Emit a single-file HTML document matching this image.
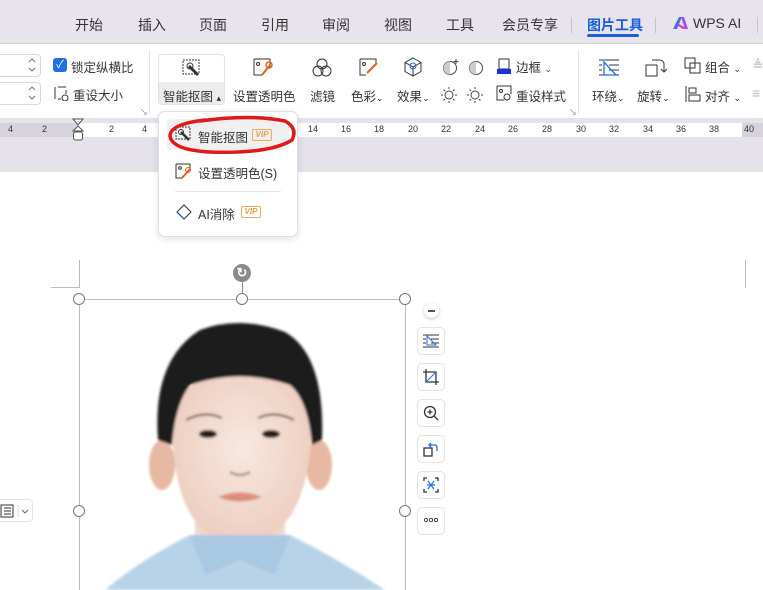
<!DOCTYPE html>
<html><head><meta charset="utf-8"><style>
*{margin:0;padding:0;box-sizing:border-box}
body{width:763px;height:590px;overflow:hidden;background:#fff;font-family:"Liberation Sans","Noto Sans CJK SC",sans-serif;color:#333;position:relative}
.a{position:absolute;white-space:nowrap}
.tab{font-size:14px;top:15px;color:#333}
.t{font-size:12.5px;color:#333}
</style></head><body>
<div class="a" style="left:0;top:0;width:763px;height:44px;background:#e8e4ee;border-bottom:1px solid #d5d0dc"></div>
<div class="a tab" style="left:75px">开始</div>
<div class="a tab" style="left:138px">插入</div>
<div class="a tab" style="left:199px">页面</div>
<div class="a tab" style="left:261px">引用</div>
<div class="a tab" style="left:322px">审阅</div>
<div class="a tab" style="left:384px">视图</div>
<div class="a tab" style="left:446px">工具</div>
<div class="a tab" style="left:502px">会员专享</div>
<div class="a" style="left:571px;top:17px;width:1px;height:16px;background:#c8c3cf"></div>
<div class="a tab" style="left:587px;color:#1a5fd6;font-weight:bold">图片工具</div>
<div class="a" style="left:587px;top:34px;width:52px;height:3px;background:#1a5fd6;border-radius:2px"></div>
<div class="a" style="left:655px;top:17px;width:1px;height:16px;background:#c8c3cf"></div>
<svg class="a" style="left:672px;top:16px" width="18" height="14" viewBox="0 0 18 14"><path d="M1 13 L7 1 L10 1 L5 13Z" fill="#4a6cf0"/><path d="M7 8 L16 13 L11 13 L6 10Z" fill="#e53fa0"/><path d="M9 1 L12 1 L16 13 L13 13Z" fill="#9b4ff0"/></svg>
<div class="a tab" style="left:693px">WPS AI</div>
<div class="a" style="left:757px;top:17px;width:1px;height:16px;background:#c8c3cf"></div>
<div class="a" style="left:0;top:44px;width:763px;height:74px;background:#fff;box-shadow:0 1px 3px rgba(0,0,0,.12)"></div>
<div class="a" style="left:-5px;top:54px;width:46px;height:23px;border:1px solid #d8d8d8;border-radius:4px"></div>
<div class="a" style="left:-5px;top:82px;width:46px;height:23px;border:1px solid #d8d8d8;border-radius:4px"></div>
<svg class="a" style="left:27px;top:57px" width="10" height="16"><path d="M2 5l3-3 3 3M2 11l3 3 3-3" fill="none" stroke="#777"/></svg>
<svg class="a" style="left:27px;top:85px" width="10" height="16"><path d="M2 5l3-3 3 3M2 11l3 3 3-3" fill="none" stroke="#777"/></svg>
<div class="a" style="left:53px;top:58px;width:14px;height:14px;background:#1f6fe5;border-radius:3px;color:#fff;font-size:11px;line-height:14px;text-align:center">✓</div>
<div class="a t" style="left:71px;top:57px">锁定纵横比</div>
<svg class="a" style="left:53px;top:85px" width="16" height="16"><path d="M2 2v12M5 2h8M5 14h3M13 5v4" stroke="#333" fill="none"/><circle cx="12" cy="13" r="3" stroke="#333" fill="none"/></svg>
<div class="a t" style="left:73px;top:85px">重设大小</div>
<div class="a" style="left:140px;top:107px;font-size:8px;color:#888">↘</div>
<div class="a" style="left:149px;top:50px;width:1px;height:64px;background:#e3e3e3"></div>
<div class="a" style="left:158px;top:54px;width:67px;height:51px;border:1px solid #e2e2e2;border-radius:4px;background:#fff"></div>
<div class="a" style="left:159px;top:82px;width:65px;height:22px;background:#ececec"></div>
<svg class="a" style="left:181px;top:58px" width="22" height="20"><rect x="2" y="2" width="16" height="14" fill="none" stroke="#333" stroke-dasharray="2 1"/><path d="M8 8l9 9" stroke="#333" stroke-width="3"/><circle cx="9" cy="8" r="3" fill="none" stroke="#333"/></svg>
<div class="a t" style="left:163px;top:86px">智能抠图 <span style="font-size:9px">▴</span></div>
<svg class="a" style="left:252px;top:57px" width="22" height="22"><path d="M2 2h16v8M2 2v16h8" fill="none" stroke="#333"/><circle cx="6" cy="7" r="1.5" fill="none" stroke="#333"/><path d="M18 8l-8 10" stroke="#e0601c" stroke-width="2"/><circle cx="17" cy="8" r="3" fill="none" stroke="#e0601c" stroke-width="1.5"/></svg>
<div class="a t" style="left:233px;top:86px">设置透明色</div>
<svg class="a" style="left:311px;top:57px" width="22" height="22"><circle cx="11" cy="7" r="5" fill="none" stroke="#333"/><circle cx="7" cy="14" r="5" fill="none" stroke="#333"/><circle cx="15" cy="14" r="5" fill="none" stroke="#333"/></svg>
<div class="a t" style="left:310px;top:86px">滤镜</div>
<svg class="a" style="left:358px;top:57px" width="22" height="22"><path d="M2 2h16v6M2 2v16h6" fill="none" stroke="#333"/><circle cx="6" cy="7" r="1.5" fill="none" stroke="#333"/><path d="M19 6l-10 10" stroke="#e0601c" stroke-width="2"/></svg>
<div class="a t" style="left:351px;top:86px">色彩<span style="font-size:9px">⌄</span></div>
<svg class="a" style="left:402px;top:56px" width="22" height="22"><path d="M11 2l8 4.5v9L11 20l-8-4.5v-9z" fill="none" stroke="#333"/><path d="M3 6.5l8 4.5 8-4.5M11 11v9" stroke="#333" fill="none"/><circle cx="11" cy="10" r="3" fill="none" stroke="#1f6fe5"/></svg>
<div class="a t" style="left:397px;top:86px">效果<span style="font-size:9px">⌄</span></div>
<svg class="a" style="left:441px;top:58px" width="20" height="18"><circle cx="9" cy="10" r="6.5" fill="none" stroke="#444"/><path d="M9 3.5a6.5 6.5 0 0 0 0 13z" fill="#ccc"/><path d="M15 1v5M12.5 3.5h5" stroke="#444"/></svg>
<svg class="a" style="left:467px;top:58px" width="20" height="18"><circle cx="9" cy="10" r="6.5" fill="none" stroke="#444"/><path d="M9 3.5a6.5 6.5 0 0 0 0 13z" fill="#ccc"/><path d="M12.5 3.5h5" stroke="#fff" stroke-width="2"/></svg>
<svg class="a" style="left:441px;top:85px" width="18" height="18"><circle cx="8" cy="10" r="4" fill="none" stroke="#444"/><path d="M8 2v2M8 16v2M0 10h2M14 10h2M2.5 4.5l1.5 1.5M12 14l1.5 1.5M2.5 15.5L4 14M12 6l1.5-1.5" stroke="#444"/></svg>
<svg class="a" style="left:467px;top:85px" width="18" height="18"><circle cx="8" cy="10" r="4" fill="none" stroke="#444"/><path d="M8 2v2M8 16v2M0 10h2M14 10h2M2.5 4.5l1.5 1.5M12 14l1.5 1.5M2.5 15.5L4 14" stroke="#444"/></svg>
<svg class="a" style="left:496px;top:57px" width="16" height="18"><path d="M3 2h10v10H3z" fill="none" stroke="#333"/><rect x="1" y="12" width="14" height="5" fill="#1a2fe0"/></svg>
<div class="a t" style="left:516px;top:57px">边框 <span style="font-size:9px">⌄</span></div>
<svg class="a" style="left:496px;top:85px" width="16" height="16"><path d="M1 1h14v8M1 1v14h7" fill="none" stroke="#333"/><circle cx="5" cy="6" r="1.5" fill="none" stroke="#333"/><circle cx="11" cy="12" r="3" fill="none" stroke="#333"/></svg>
<div class="a t" style="left:516px;top:86px">重设样式</div>
<div class="a" style="left:569px;top:107px;font-size:8px;color:#888">↘</div>
<div class="a" style="left:578px;top:50px;width:1px;height:64px;background:#e3e3e3"></div>
<svg class="a" style="left:597px;top:57px" width="24" height="22"><path d="M2 3h20M12 8h10M12 13h10M2 18h20M2 8h3M2 13h3" stroke="#333"/><path d="M7 5v13h12z" fill="none" stroke="#1f6fe5" stroke-width="1.3"/></svg>
<div class="a t" style="left:592px;top:86px">环绕<span style="font-size:9px">⌄</span></div>
<svg class="a" style="left:644px;top:57px" width="24" height="22"><rect x="2" y="8" width="11" height="11" fill="none" stroke="#333"/><path d="M8 3h8a4 4 0 0 1 4 4v7M17 12l3 3 3-3" fill="none" stroke="#333"/></svg>
<div class="a t" style="left:637px;top:86px">旋转<span style="font-size:9px">⌄</span></div>
<svg class="a" style="left:684px;top:57px" width="18" height="18"><rect x="1" y="1" width="10" height="10" fill="none" stroke="#333"/><rect x="6" y="6" width="10" height="10" fill="none" stroke="#333"/></svg>
<div class="a t" style="left:705px;top:57px">组合 <span style="font-size:9px">⌄</span></div>
<svg class="a" style="left:684px;top:85px" width="18" height="18"><path d="M2 1v16M5 3h7v5H5zM5 10h11v6H5z" fill="none" stroke="#333"/></svg>
<div class="a t" style="left:705px;top:86px">对齐 <span style="font-size:9px">⌄</span></div>
<div class="a" style="left:752px;top:57px;font-size:14px;color:#bbb">≜</div>
<div class="a" style="left:752px;top:85px;font-size:14px;color:#bbb">≡</div>
<div class="a" style="left:0;top:118px;width:763px;height:54px;background:#e6e2ec"></div>
<div class="a" style="left:0;top:123px;width:763px;height:14px;background:#d6d3dc"></div>
<div class="a" style="left:78px;top:123px;width:664px;height:14px;background:#fff"></div>
<div class="a" style="left:0;top:124px;width:763px;font-size:9px;color:#333;font-family:'Liberation Sans',sans-serif">
<span class="a" style="left:8px">4</span><span class="a" style="left:42px">2</span><span class="a" style="left:109px">2</span><span class="a" style="left:142px">4</span>
<span class="a" style="left:308px">14</span><span class="a" style="left:341px">16</span><span class="a" style="left:374px">18</span><span class="a" style="left:408px">20</span><span class="a" style="left:441px">22</span><span class="a" style="left:475px">24</span><span class="a" style="left:508px">26</span><span class="a" style="left:542px">28</span><span class="a" style="left:576px">30</span><span class="a" style="left:609px">32</span><span class="a" style="left:643px">34</span><span class="a" style="left:676px">36</span><span class="a" style="left:709px">38</span><span class="a" style="left:744px">40</span></div>
<svg class="a" style="left:72px;top:118px" width="12" height="30"><path d="M1 1h10L6 7z M6 8l5 5H1z" fill="#fff" stroke="#555"/><rect x="1.5" y="14" width="9" height="8" rx="2" fill="#fff" stroke="#555"/></svg>
<div class="a" style="left:0;top:172px;width:763px;height:418px;background:#fff"></div>
<div class="a" style="left:79px;top:260px;width:1px;height:28px;background:#bbb"></div>
<div class="a" style="left:51px;top:287px;width:29px;height:1px;background:#bbb"></div>
<div class="a" style="left:745px;top:260px;width:1px;height:28px;background:#bbb"></div>
<svg class="a" style="left:80px;top:299px" width="326" height="291" viewBox="80 299 326 291">
<defs><filter id="b"><feGaussianBlur stdDeviation="1.2"/></filter><radialGradient id="sk" cx="50%" cy="45%" r="60%"><stop offset="0" stop-color="#f8e8e0"/><stop offset="1" stop-color="#eccbbc"/></radialGradient></defs>
<g filter="url(#b)">
<path d="M105 590 Q140 560 190 535 L290 535 Q340 560 385 590Z" fill="#b8d3e8"/>
<path d="M195 520 L285 520 L285 545 Q240 570 195 545Z" fill="#f0d8cc"/>
<ellipse cx="162" cy="465" rx="13" ry="25" fill="#e7b8a2"/>
<ellipse cx="319" cy="465" rx="13" ry="25" fill="#e7b8a2"/>
<path d="M172 420 Q172 540 240 545 Q310 540 312 420 Q312 380 240 370 Q172 380 172 420Z" fill="url(#sk)"/>
<path d="M158 440 Q152 360 200 330 Q240 315 285 332 Q325 355 322 440 L312 445 Q308 400 290 385 Q240 368 190 385 Q175 405 172 445Z" fill="#1b1b1b"/>
<ellipse cx="208" cy="434" rx="9" ry="4" fill="#2a1e1a"/>
<ellipse cx="271" cy="434" rx="9" ry="4" fill="#2a1e1a"/>
<path d="M186 420 Q205 410 222 418 M258 418 Q275 410 294 420" stroke="#6a4a3e" stroke-width="2" fill="none"/>
<path d="M230 472 Q240 478 250 472" stroke="#a07060" stroke-width="2" fill="none"/>
<path d="M218 497 Q240 488 262 497 Q240 506 218 497Z" fill="#d98e80"/>
<path d="M190 535 L205 575 L240 560 L275 575 L290 535" fill="#a9c8e2"/>
</g></svg>
<div class="a" style="left:79px;top:299px;width:327px;height:291px;border:1px solid #bbb;border-bottom:none"></div>
<div class="a" style="left:242px;top:280px;width:1px;height:19px;background:#888"></div>
<div class="a" style="left:233px;top:264px;width:18px;height:18px;border-radius:50%;background:#8a8a8a;color:#fff;font-size:13px;line-height:18px;text-align:center;font-weight:bold">↻</div>
<div class="a" style="left:73px;top:293px;width:12px;height:12px;border-radius:50%;border:1px solid #777;background:#fff"></div>
<div class="a" style="left:236px;top:293px;width:12px;height:12px;border-radius:50%;border:1px solid #777;background:#fff"></div>
<div class="a" style="left:399px;top:293px;width:12px;height:12px;border-radius:50%;border:1px solid #777;background:#fff"></div>
<div class="a" style="left:73px;top:505px;width:12px;height:12px;border-radius:50%;border:1px solid #777;background:#fff"></div>
<div class="a" style="left:399px;top:505px;width:12px;height:12px;border-radius:50%;border:1px solid #777;background:#fff"></div>
<div class="a" style="left:-4px;top:499px;width:37px;height:23px;border:1px solid #e4e4e4;border-radius:4px;background:#fff"></div>
<svg class="a" style="left:0;top:503px" width="32" height="16"><path d="M1 2h12v12H1zM4 5h7M4 8h7M4 11h7" fill="none" stroke="#333"/><path d="M18 2v12" stroke="#ddd"/><path d="M22 7l3 3 3-3" fill="none" stroke="#666"/></svg>
<div class="a" style="left:424px;top:303px;width:15px;height:15px;border-radius:50%;background:#fff;box-shadow:0 1px 3px rgba(0,0,0,.25)"></div>
<div class="a" style="left:428px;top:310px;width:7px;height:2px;background:#555"></div>
<div class="a" style="left:417px;top:327px;width:28px;height:28px;border:1px solid #e3e3e3;border-radius:5px"></div>
<svg class="a" style="left:423px;top:333px" width="16" height="16"><path d="M0 2h16M8 6h8M8 10h8M0 14h16M0 6h3M0 10h3" stroke="#333"/><path d="M4 3v9h9z" fill="none" stroke="#1f6fe5"/></svg>
<div class="a" style="left:417px;top:363px;width:28px;height:28px;border:1px solid #e3e3e3;border-radius:5px"></div>
<svg class="a" style="left:423px;top:369px" width="16" height="16"><path d="M3 0v13h13M0 3h13v13" fill="none" stroke="#333" stroke-width="1.3"/><path d="M3 13L13 3" stroke="#1f6fe5"/></svg>
<div class="a" style="left:417px;top:399px;width:28px;height:28px;border:1px solid #e3e3e3;border-radius:5px"></div>
<svg class="a" style="left:423px;top:405px" width="16" height="16"><circle cx="7" cy="7" r="5.5" fill="none" stroke="#333" stroke-width="1.3"/><path d="M11 11l4 4M4.5 7h5M7 4.5v5" stroke="#333" stroke-width="1.3"/></svg>
<div class="a" style="left:417px;top:435px;width:28px;height:28px;border:1px solid #e3e3e3;border-radius:5px"></div>
<svg class="a" style="left:423px;top:441px" width="16" height="16"><rect x="1" y="7" width="8" height="8" fill="none" stroke="#333" stroke-width="1.3"/><path d="M6 4h6a2 2 0 0 1 2 2v4M8 2L6 4l2 2" fill="none" stroke="#1f6fe5" stroke-width="1.3"/></svg>
<div class="a" style="left:417px;top:471px;width:28px;height:28px;border:1px solid #e3e3e3;border-radius:5px"></div>
<svg class="a" style="left:423px;top:477px" width="16" height="16"><path d="M1 4V1h3M12 1h3v3M15 12v3h-3M4 15H1v-3" fill="none" stroke="#333" stroke-width="1.3"/><path d="M5 4l6 8M11 4l-6 8M4 8h8" stroke="#1f6fe5" stroke-width="1.2"/></svg>
<div class="a" style="left:417px;top:507px;width:28px;height:28px;border:1px solid #e3e3e3;border-radius:5px"></div>
<svg class="a" style="left:423px;top:517px" width="16" height="6"><circle cx="3" cy="3" r="1.6" fill="none" stroke="#444"/><circle cx="8" cy="3" r="1.6" fill="none" stroke="#444"/><circle cx="13" cy="3" r="1.6" fill="none" stroke="#444"/></svg>
<div class="a" style="left:158px;top:111px;width:140px;height:126px;background:#fff;border:1px solid #e0e0e0;border-radius:7px;box-shadow:0 2px 8px rgba(0,0,0,.12)"></div>
<div class="a" style="left:167px;top:119px;width:122px;height:31px;background:#f0f0f0;border-radius:4px"></div>
<svg class="a" style="left:175px;top:126px" width="17" height="16"><rect x="1" y="1" width="14" height="12" fill="none" stroke="#333" stroke-dasharray="2 1"/><path d="M6 6l8 8" stroke="#333" stroke-width="2.5"/><circle cx="6" cy="6" r="2.5" fill="none" stroke="#333"/></svg>
<div class="a t" style="left:198px;top:127px">智能抠图</div>
<div class="a" style="left:252px;top:129px;width:20px;height:12px;border:1px solid #e8a860;border-radius:2px;color:#e0a050;font-size:8px;font-weight:bold;font-style:italic;text-align:center;line-height:10px">VIP</div>
<svg class="a" style="left:175px;top:163px" width="17" height="16"><path d="M1 1h14v6M1 1v14h6" fill="none" stroke="#333"/><circle cx="5" cy="5" r="1.3" fill="none" stroke="#333"/><path d="M15 6l-8 9" stroke="#e0601c" stroke-width="1.8"/><circle cx="13" cy="7" r="2.5" fill="none" stroke="#e0601c"/></svg>
<div class="a t" style="left:198px;top:163px">设置透明色(S)</div>
<div class="a" style="left:175px;top:191px;width:106px;height:1px;background:#e5e5e5"></div>
<svg class="a" style="left:175px;top:204px" width="17" height="16"><path d="M9 1l7 7-7 7-7-7z" fill="none" stroke="#333"/><path d="M2 8l7 7" stroke="#1f6fe5" stroke-width="1.5" stroke-dasharray="2 1"/></svg>
<div class="a t" style="left:198px;top:204px">AI消除</div>
<div class="a" style="left:241px;top:206px;width:20px;height:12px;border:1px solid #e8a860;border-radius:2px;color:#e0a050;font-size:8px;font-weight:bold;font-style:italic;text-align:center;line-height:10px">VIP</div>
<svg class="a" style="left:160px;top:112px" width="140" height="46"><path d="M40 9 Q90 2 125 9 Q138 16 132 28 Q110 42 50 40 Q12 38 10 24 Q10 12 45 8" fill="none" stroke="#e01818" stroke-width="3.5" stroke-linecap="round"/></svg>
</body></html>
